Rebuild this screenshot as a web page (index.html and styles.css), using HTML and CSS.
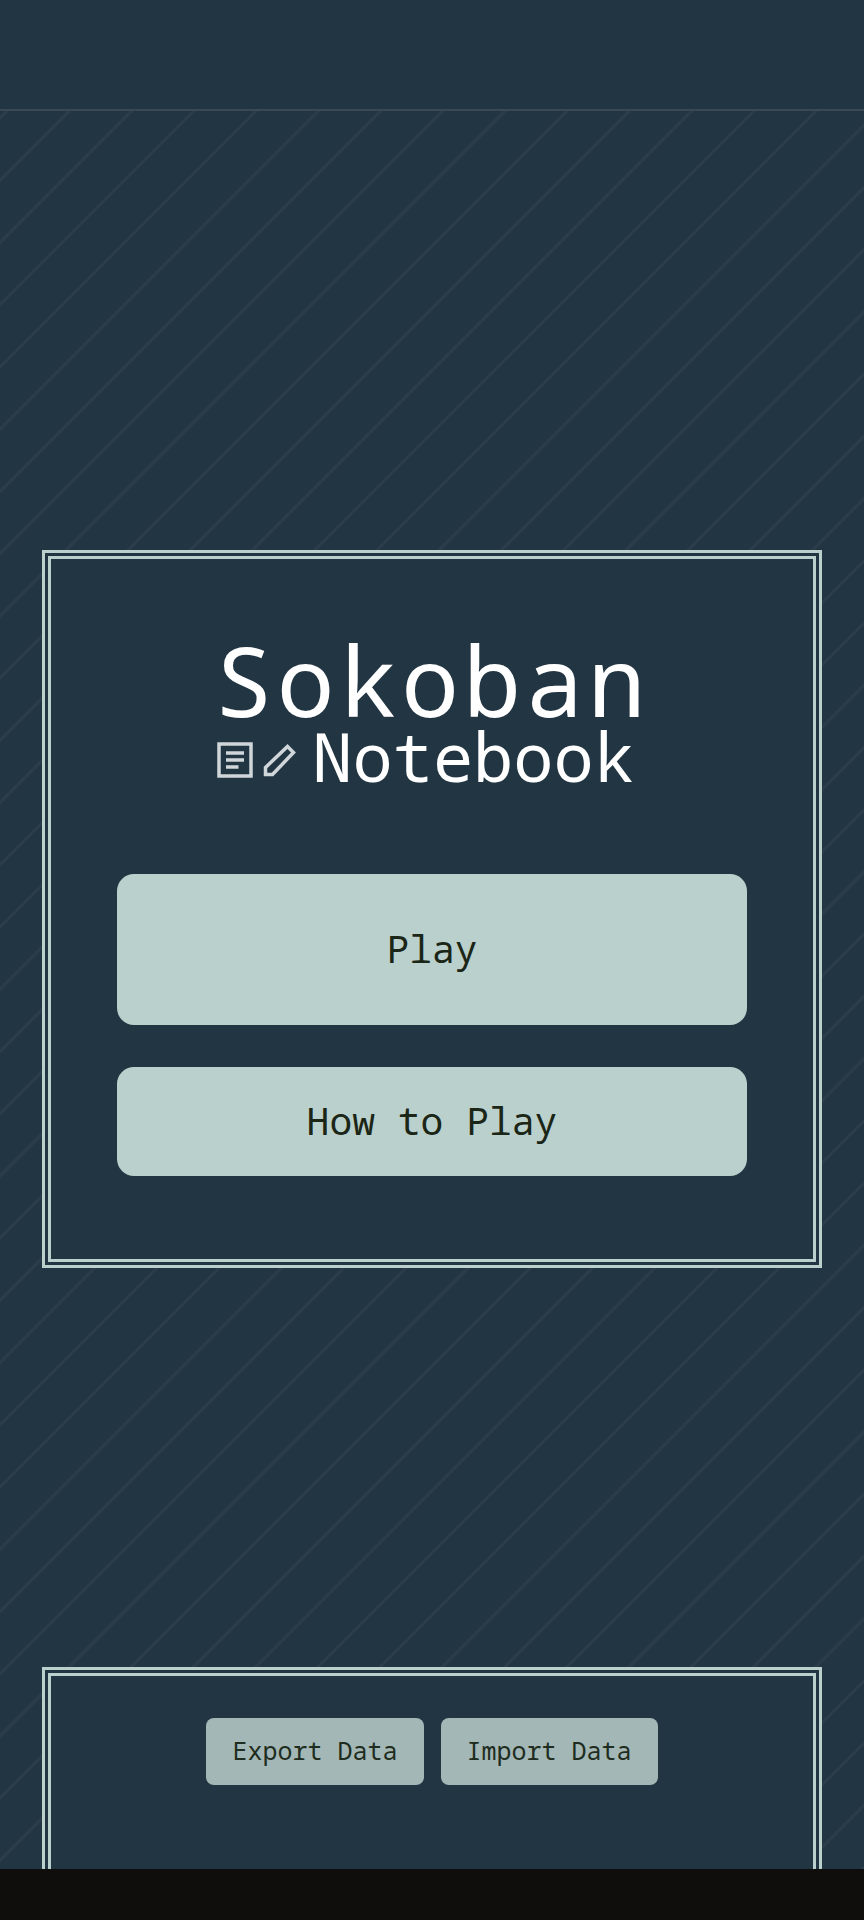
FILE: index.html
```html
<!DOCTYPE html>
<html lang="en">
<head>
<meta charset="utf-8">
<meta name="viewport" content="width=device-width, initial-scale=1">
<title>Sokoban Notebook</title>
<link rel="stylesheet" href="styles.css">
</head>
<body>
<header class="topbar"></header>
<main class="page">
  <div class="stage">
    <section class="panel menu">
      <h1 class="title">
        <span class="title-main">Sokoban</span>
        <span class="title-sub">
          <span class="icons">
            <svg class="icon" viewBox="0 0 36 36" aria-hidden="true"><path d="M2 2h32v32h-32z"/><path d="M9 11h18M9 18h18M9 25h12.500"/></svg>
            <svg class="icon" viewBox="0 0 36 36" aria-hidden="true"><path d="M3.500 32.500v-7L25.500 4.500l6 6L10.500 32.500z"/></svg>
          </span>
          <span>Notebook</span>
        </span>
      </h1>
      <nav class="actions">
        <button class="button button-play" type="button">Play</button>
        <button class="button button-help" type="button">How to Play</button>
      </nav>
    </section>
  </div>
  <section class="panel data">
    <button class="button button-small" type="button">Export Data</button>
    <button class="button button-small" type="button">Import Data</button>
  </section>
</main>
<footer class="bottombar"></footer>
</body>
</html>
```
FILE: styles.css
```css
* {
  box-sizing: border-box;
}

body {
  margin: 0;
  min-height: 100vh;
  display: flex;
  flex-direction: column;
  background: #223543;
  color: #fff;
  font-family: "Noto Sans Mono", "Noto Mono", "DejaVu Sans Mono", monospace;
}

.topbar {
  height: 111px;
  border-bottom: 2px solid #394a55;
}

.page {
  flex: 1;
  display: flex;
  flex-direction: column;
  padding: 0 42px;
  background: repeating-linear-gradient(-45deg, #2b3d4a 0 2px, #223543 3px 43px, #2b3d4a 44px);
}

.stage {
  flex: 1;
  display: flex;
  flex-direction: column;
  justify-content: center;
  padding-top: 39px;
}

.panel {
  border: 9px double #bad0cd;
  background: #223543;
}

.menu {
  padding: 71px 66px 83px;
}

.title {
  display: flex;
  flex-direction: column;
  width: fit-content;
  margin: 0 auto 90px;
  font-weight: 400;
}

.title-main {
  font-size: 97px;
  line-height: 98px;
  letter-spacing: 4px;
}

.title-sub {
  display: flex;
  align-items: center;
  gap: 14px;
  font-size: 67px;
  line-height: 56px;
}

.icons {
  display: flex;
  gap: 9px;
  padding: 8px 0 0 3px;
}

.icon {
  width: 36px;
  height: 36px;
  fill: none;
  stroke: #d0d6d9;
  stroke-width: 3.5;
}

.actions {
  display: flex;
  flex-direction: column;
  gap: 42px;
}

.button {
  padding: 0 0 3px;
  border: 0;
  border-radius: 17px;
  background: #bad0cd;
  color: #1b2616;
  font-family: inherit;
  font-size: 38px;
}

.button-play {
  height: 151px;
}

.button-help {
  height: 109px;
}

.data {
  display: flex;
  justify-content: center;
  align-items: flex-start;
  gap: 17px;
  height: 202px;
  padding-top: 42px;
  border-bottom: 0;
}

.button-small {
  height: 67px;
  padding: 0 26px 4px;
  border-radius: 8px;
  background: #a3b8b6;
  color: #1f2d20;
  font-size: 25px;
}

.bottombar {
  height: 51px;
  background: #0f0e0c;
}
```
